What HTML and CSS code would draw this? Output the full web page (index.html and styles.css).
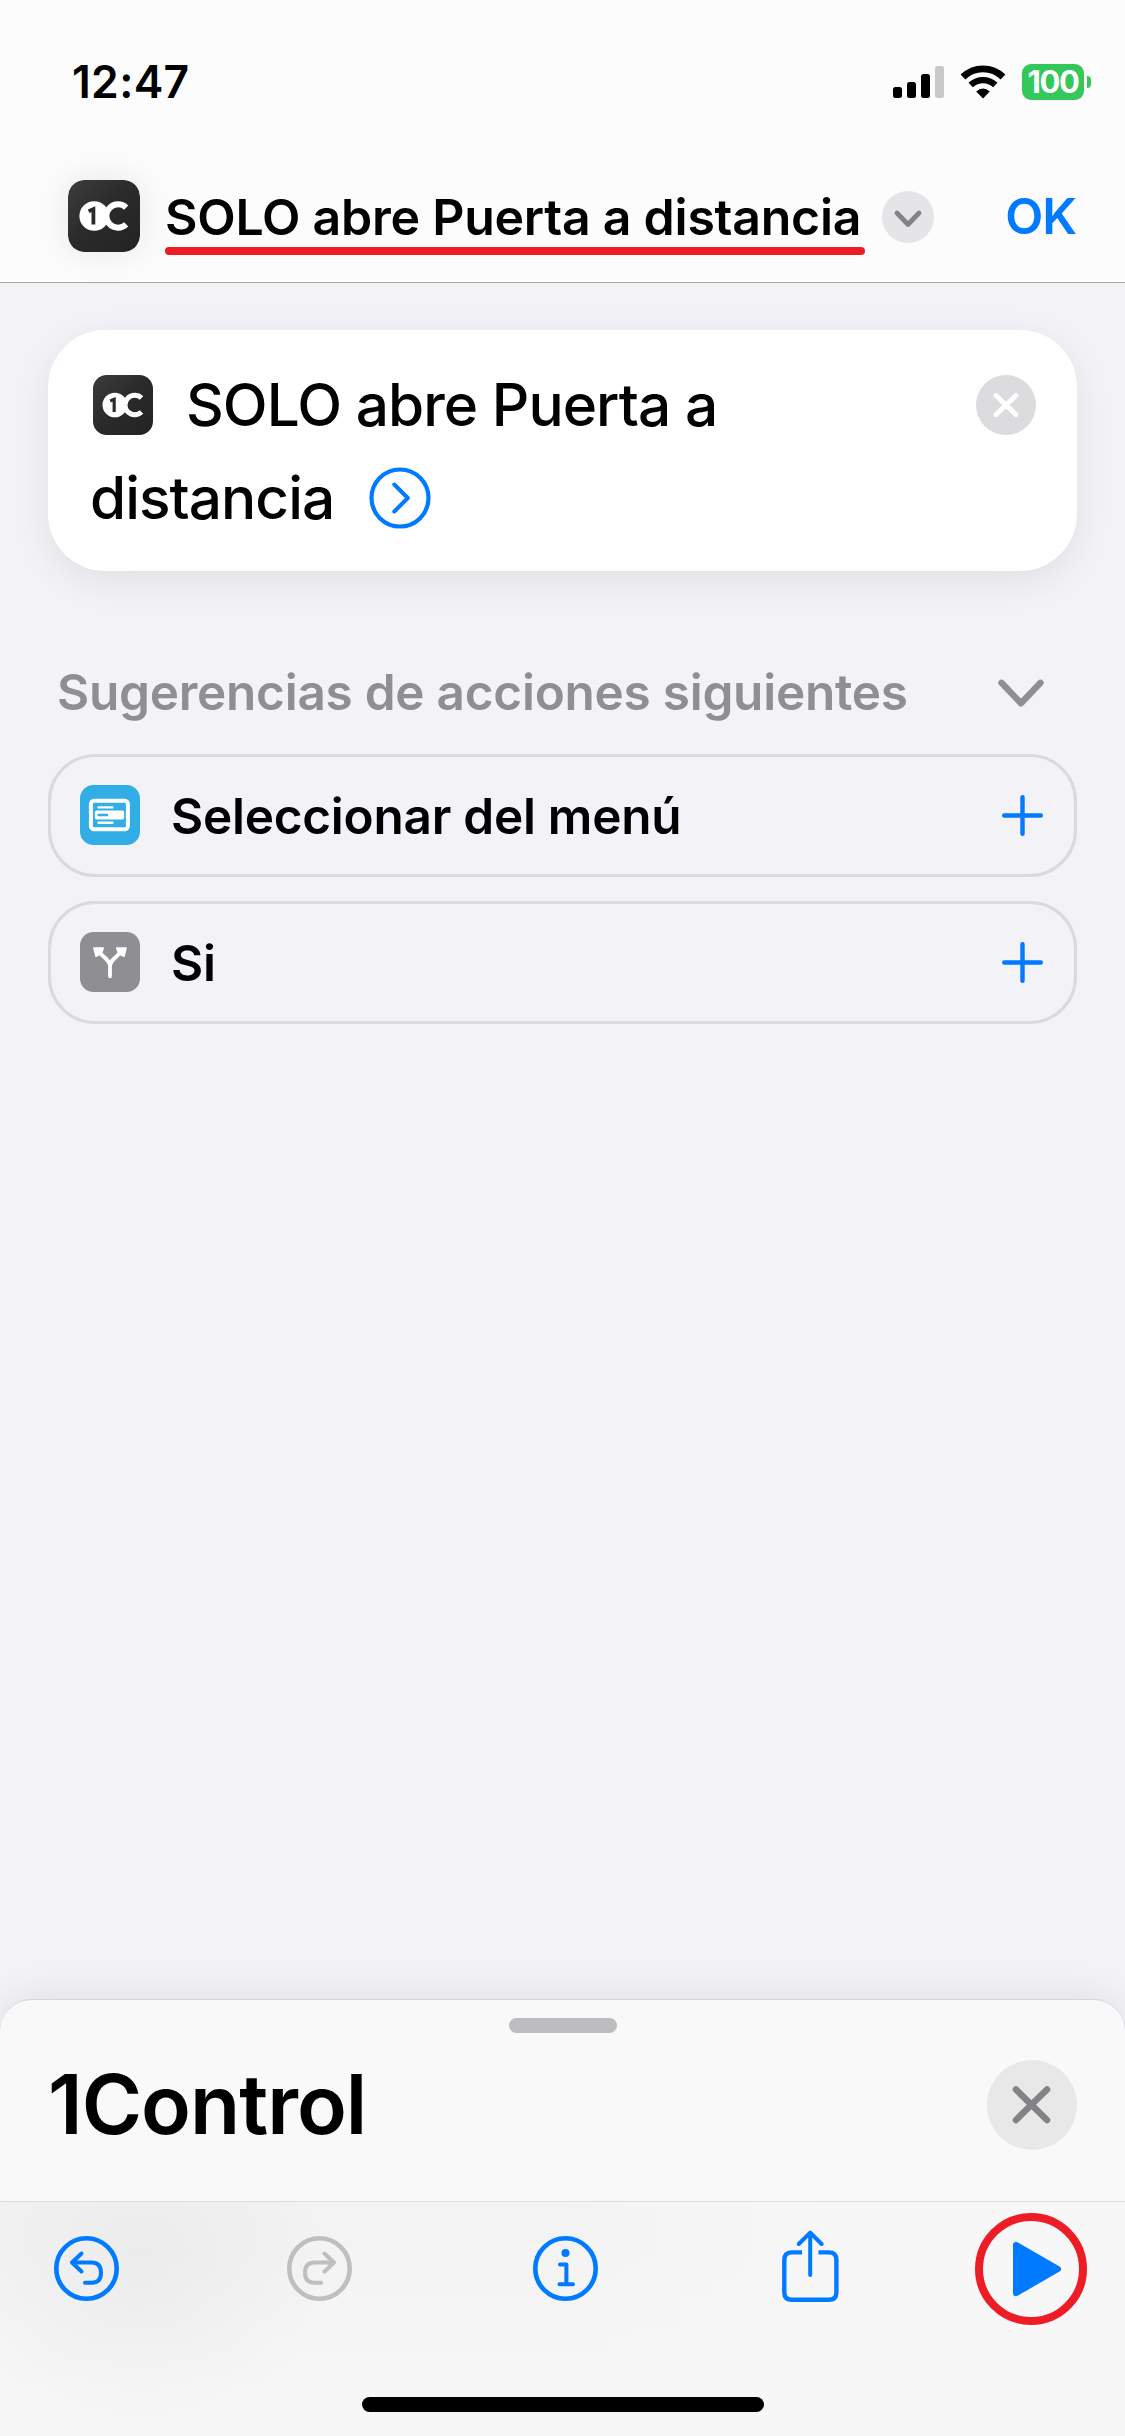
FILE: index.html
```html
<!DOCTYPE html>
<html lang="es">
<head>
<meta charset="utf-8">
<title>Atajos</title>
<link rel="stylesheet" href="styles.css">
</head>
<body>
<svg class="defs" width="0" height="0" aria-hidden="true">
  <defs>
    <linearGradient id="tile" x1="0" y1="0" x2="1" y2="1">
      <stop offset="0" stop-color="#3c3c3c"/>
      <stop offset="0.5" stop-color="#2a2a2a"/>
      <stop offset="1" stop-color="#232323"/>
    </linearGradient>
    <symbol id="app-logo" viewBox="0 0 72 72">
      <rect width="72" height="72" rx="16.5" fill="url(#tile)"/>
      <circle cx="26.2" cy="36" r="14.8" fill="#fff"/>
      <path d="M58.2 27.6A11.7 11.7 0 1 0 58.2 44.4" fill="none" stroke="#fff" stroke-width="6"/>
      <path d="M20.6 31.2L25.4 29.2V44.4" fill="none" stroke="#2a2a2a" stroke-width="3.8"/>
    </symbol>
  </defs>
</svg>
<div class="screen">
  <header class="top">
    <div class="status">
      <span class="time">12:47</span>
      <div class="indicators">
        <svg class="signal" width="51" height="32" viewBox="0 0 51 32">
          <rect x="0" y="21" width="9" height="11" rx="2.5"/>
          <rect x="14" y="16" width="9" height="16" rx="2.5"/>
          <rect x="28" y="8" width="9" height="24" rx="2.5"/>
          <rect x="42" y="0" width="9" height="32" rx="2.5" fill="#c9c9ca"/>
        </svg>
        <svg class="wifi" width="46" height="34" viewBox="0 0 46 34">
          <path d="M3 12A28.5 28.5 0 0 1 43 12" fill="none" stroke="#000" stroke-width="6.8"/>
          <path d="M10.7 20A18 18 0 0 1 35.3 20" fill="none" stroke="#000" stroke-width="6.4"/>
          <path d="M16.2 26.6Q23 20.6 29.8 26.6L23 33.6Z"/>
        </svg>
        <span class="battery">100</span>
        <span class="nub"></span>
      </div>
    </div>
    <div class="titlebar">
      <svg class="app-icon" width="72" height="72"><use href="#app-logo"/></svg>
      <h1 class="title"><span>SOLO abre Puerta a distancia</span></h1>
      <svg class="more" width="52" height="52" viewBox="0 0 52 52">
        <circle cx="26" cy="26" r="26" fill="#e5e5e7"/>
        <path d="M15 22L26 33.5L37 22" fill="none" stroke="#838387" stroke-width="4.8" stroke-linecap="round" stroke-linejoin="round"/>
      </svg>
      <span class="ok">OK</span>
    </div>
  </header>

  <main class="content">
    <section class="action">
      <div class="action-line">
        <svg width="60" height="60"><use href="#app-logo"/></svg>
        <span class="action-text">SOLO abre Puerta a</span>
        <svg class="remove" width="60" height="60" viewBox="0 0 60 60">
          <circle cx="30" cy="30" r="30" fill="#dcdcde"/>
          <path d="M20 20.5L40 39.5M40 20.5L20 39.5" stroke="#fff" stroke-width="5" stroke-linecap="round"/>
        </svg>
      </div>
      <div class="action-line">
        <span class="action-text second">distancia</span>
        <svg class="expand" width="62" height="62" viewBox="0 0 62 62" fill="none" stroke="#007aff" stroke-linecap="round" stroke-linejoin="round">
          <circle cx="31" cy="31" r="28.5" stroke-width="4.2"/>
          <path d="M25.3 17.5L38.8 31L25.3 44.5" stroke-width="4"/>
        </svg>
      </div>
    </section>

    <div class="hint">
      <h2 class="hint-text">Sugerencias de acciones siguientes</h2>
      <svg class="collapse" width="46" height="29" viewBox="0 0 46 29">
        <path d="M3.5 3.8L23 24.3L42.5 3.8" fill="none" stroke="#8e8e93" stroke-width="6.4" stroke-linecap="round" stroke-linejoin="round"/>
      </svg>
    </div>

    <div class="suggestions">
      <div class="row">
        <svg class="row-icon" width="60" height="60" viewBox="0 0 60 60">
          <rect width="60" height="60" rx="13.5" fill="#32ade6"/>
          <rect x="10.9" y="15.7" width="37" height="28.6" rx="3.2" fill="none" stroke="#fff" stroke-width="4"/>
          <rect x="14.8" y="25.5" width="29.4" height="9" rx="2" fill="#fff"/>
          <path d="M18.6 22.4H32.4M18.6 37.7H32.4" stroke="#fff" stroke-width="2.4" stroke-linecap="round"/>
          <path d="M18.6 30H27" stroke="#32ade6" stroke-width="2.4" stroke-linecap="round"/>
        </svg>
        <span class="row-text">Seleccionar del menú</span>
        <svg class="plus" width="41" height="41" viewBox="0 0 41 41"><path d="M2.2 20.5H38.8M20.5 2.2V38.8"/></svg>
      </div>
      <div class="row">
        <svg class="row-icon" width="60" height="60" viewBox="0 0 60 60">
          <rect width="60" height="60" rx="13.5" fill="#8e8e93"/>
          <path d="M30 44.3V34.5C30 28.5 24 25.5 19.2 20.3M30 34.5C30 28.5 36 25.5 40.8 20.3" fill="none" stroke="#fff" stroke-width="3.8" stroke-linecap="round"/>
          <path d="M14 16L23.2 16L21.5 21.5L16 24.3ZM46 16L36.8 16L38.5 21.5L44 24.3Z" fill="#fff" stroke="#fff" stroke-width="1.6" stroke-linejoin="round"/>
        </svg>
        <span class="row-text">Si</span>
        <svg class="plus" width="41" height="41" viewBox="0 0 41 41"><path d="M2.2 20.5H38.8M20.5 2.2V38.8"/></svg>
      </div>
    </div>
  </main>

  <section class="sheet">
    <div class="grabber"></div>
    <div class="sheet-head">
      <h2 class="sheet-title">1Control</h2>
      <svg width="90" height="90" viewBox="0 0 90 90">
        <circle cx="45" cy="45" r="45" fill="#e8e8e8"/>
        <path d="M29 29.5L60 60M60 29.5L29 60" stroke="#838387" stroke-width="6.6" stroke-linecap="round"/>
      </svg>
    </div>
  </section>

  <nav class="toolbar">
    <div class="tools">
      <svg class="round" width="65" height="65" viewBox="0 0 65 65" fill="none" stroke="#007aff" stroke-width="4" stroke-linecap="round" stroke-linejoin="round">
        <circle cx="32.5" cy="32.5" r="30.2" stroke-width="4.6"/>
        <path d="M27.5 17.5L18 26.5L27.5 35.5M18 26.5H37.5Q47 26.5 47 36.8Q47 46.8 37.5 46.8H31"/>
      </svg>
      <svg class="round" width="65" height="65" viewBox="0 0 65 65" fill="none" stroke="#bfbfbf" stroke-width="4" stroke-linecap="round" stroke-linejoin="round">
        <circle cx="32.5" cy="32.5" r="30.2" stroke-width="4.6"/>
        <path d="M37.5 17.5L47 26.5L37.5 35.5M47 26.5H27.5Q18 26.5 18 36.8Q18 46.8 27.5 46.8H34"/>
      </svg>
      <svg class="round" width="65" height="65" viewBox="0 0 65 65" fill="none" stroke="#007aff" stroke-width="4" stroke-linecap="round" stroke-linejoin="round">
        <circle cx="32.5" cy="32.5" r="30.2" stroke-width="4.6"/>
        <circle cx="32.5" cy="17" r="4" fill="#007aff" stroke="none"/>
        <path d="M27 28.5H33.4V48.3M26.5 48.3H40"/>
      </svg>
      <svg class="share" width="57" height="73" viewBox="0 0 57 73" fill="none" stroke="#007aff" stroke-width="4.4">
        <path d="M20 22.4H10Q2.3 22.4 2.3 30V62.2Q2.3 69.8 10 69.8H46.8Q54.4 69.8 54.4 62.2V30Q54.4 22.4 46.8 22.4H36.5"/>
        <path d="M28.2 45V3M16.8 14L28.2 2.6L39.6 14" stroke-width="4" stroke-linecap="round" stroke-linejoin="round"/>
      </svg>
      <svg width="112" height="112" viewBox="0 0 112 112">
        <circle cx="56" cy="56" r="52" fill="none" stroke="#ee1c24" stroke-width="8"/>
        <path d="M41 31.8V80.2L83 56Z" fill="#007aff" stroke="#007aff" stroke-width="6" stroke-linejoin="round"/>
      </svg>
    </div>
    <div class="home"></div>
  </nav>
</div>
</body>
</html>
```
FILE: styles.css
```css
* { box-sizing: border-box; }

body {
  margin: 0;
  background: #f2f2f7;
  color: #000;
  font-family: Inter, "Liberation Sans", sans-serif;
}

h1, h2 { margin: 0; }

svg { display: block; flex: none; }

.defs { position: absolute; }

.screen {
  display: flex;
  flex-direction: column;
  width: 1125px;
  height: 2436px;
  overflow: hidden;
}

/* status bar and title */
.top {
  height: 283px;
  padding-top: 60px;
  border-bottom: 1px solid #a9a9ac;
  background: #fcfcfc;
}

.status {
  display: flex;
  align-items: center;
  justify-content: space-between;
  height: 44px;
  padding: 0 34px 0 72px;
}

.time {
  font-size: 44.5px;
  font-weight: 600;
  line-height: 44px;
  letter-spacing: 0.3px;
}

.indicators { display: flex; align-items: center; }

.wifi { margin: 0 16px 0 16px; }

.battery {
  width: 62px;
  height: 36px;
  border-radius: 9px;
  background: #34c759;
  color: #fff;
  font-size: 31px;
  font-weight: 700;
  line-height: 36px;
  text-align: center;
  letter-spacing: -1.4px;
}

.nub {
  width: 4px;
  height: 12px;
  margin-left: 3px;
  border-radius: 0 4px 4px 0;
  background: #34c759;
}

.titlebar {
  display: flex;
  align-items: center;
  height: 72px;
  margin-top: 76px;
  padding: 0 49px 0 68px;
}

.app-icon {
  border-radius: 16.5px;
  box-shadow: 0 0 36px rgba(0, 0, 0, 0.09);
}

.title {
  align-self: stretch;
  width: 700px;
  margin-left: 24px;
  padding-left: 1px;
  font-size: 50px;
  font-weight: 600;
  line-height: 75px;
  letter-spacing: -0.25px;
  white-space: nowrap;
}

.title::after {
  content: "";
  display: block;
  width: 700px;
  height: 8px;
  margin: -8px 0 0 0;
  border-radius: 4px;
  background: #ee1c24;
}

.more { margin: 2px 0 0 18px; }

.ok {
  margin-left: auto;
  color: #007aff;
  font-size: 49.5px;
  font-weight: 600;
  line-height: 72px;
  letter-spacing: -1px;
}

/* editor */
.content { flex: 1; padding: 47px 48px 0; }

.action {
  height: 241px;
  padding: 28px 41px 0 45px;
  border-radius: 57px;
  background: #fff;
  box-shadow: 0 10px 36px rgba(0, 0, 0, 0.08);
}

.action-line { display: flex; align-items: center; height: 93px; }

.action-text {
  margin-left: 33px;
  font-size: 58.5px;
  font-weight: 450;
  letter-spacing: -0.95px;
  white-space: nowrap;
}

.action-text.second { margin-left: -3px; }

.remove { margin-left: auto; }

.expand { margin-left: 35px; }

.hint {
  display: flex;
  align-items: center;
  justify-content: space-between;
  height: 84px;
  margin-top: 79px;
  padding: 0 33px 0 9px;
}

.hint-text {
  color: #8e8e93;
  font-size: 49.5px;
  font-weight: 600;
  letter-spacing: -0.25px;
  white-space: nowrap;
}

.collapse { margin-top: 3px; }

.suggestions {
  display: flex;
  flex-direction: column;
  gap: 24px;
  margin-top: 20px;
}

.row {
  display: flex;
  align-items: center;
  height: 123px;
  padding: 0 31px 0 29px;
  border: 3px solid #d9d9de;
  border-radius: 47px;
}

.row-icon { margin-bottom: 1px; }

.row-text {
  margin-left: 31px;
  font-size: 49.5px;
  font-weight: 600;
  letter-spacing: -0.25px;
}

.plus {
  margin-left: auto;
  fill: none;
  stroke: #007aff;
  stroke-width: 4.4;
  stroke-linecap: round;
}

/* bottom sheet */
.sheet {
  height: 202px;
  border-top: 1px solid #d5d5d8;
  border-radius: 32px 32px 0 0;
  background: #f9f9f9;
  box-shadow: 0 0 40px rgba(0, 0, 0, 0.09);
}

.grabber {
  width: 108px;
  height: 15px;
  margin: 18px auto 0;
  border-radius: 7.5px;
  background: #bdbdbf;
}

.sheet-head {
  display: flex;
  align-items: center;
  justify-content: space-between;
  height: 90px;
  margin-top: 27px;
  padding: 0 48px;
}

.sheet-title {
  font-size: 82px;
  font-weight: 600;
  line-height: 90px;
  letter-spacing: -1px;
}

.toolbar {
  position: relative;
  height: 235px;
  border-top: 1px solid #dcdcdd;
  background:
    radial-gradient(circle 190px at 140px 60px, rgba(0, 0, 0, 0.03), transparent),
    linear-gradient(180deg, rgba(247, 247, 247, 0) 20%, #f7f7f7 85%),
    linear-gradient(90deg, #f3f3f3 50%, #f7f7f8 75%);
}

.tools {
  display: grid;
  grid-template-columns: 233px 246px 249px 193px 112px;
  align-items: center;
  height: 112px;
  margin-top: 11px;
  padding-left: 54px;
}

.round { margin-top: -1px; }

.share { margin-top: -5px; }

.home {
  width: 402px;
  height: 15px;
  margin: 72px auto 0;
  border-radius: 7.5px;
  background: #000;
}
```
